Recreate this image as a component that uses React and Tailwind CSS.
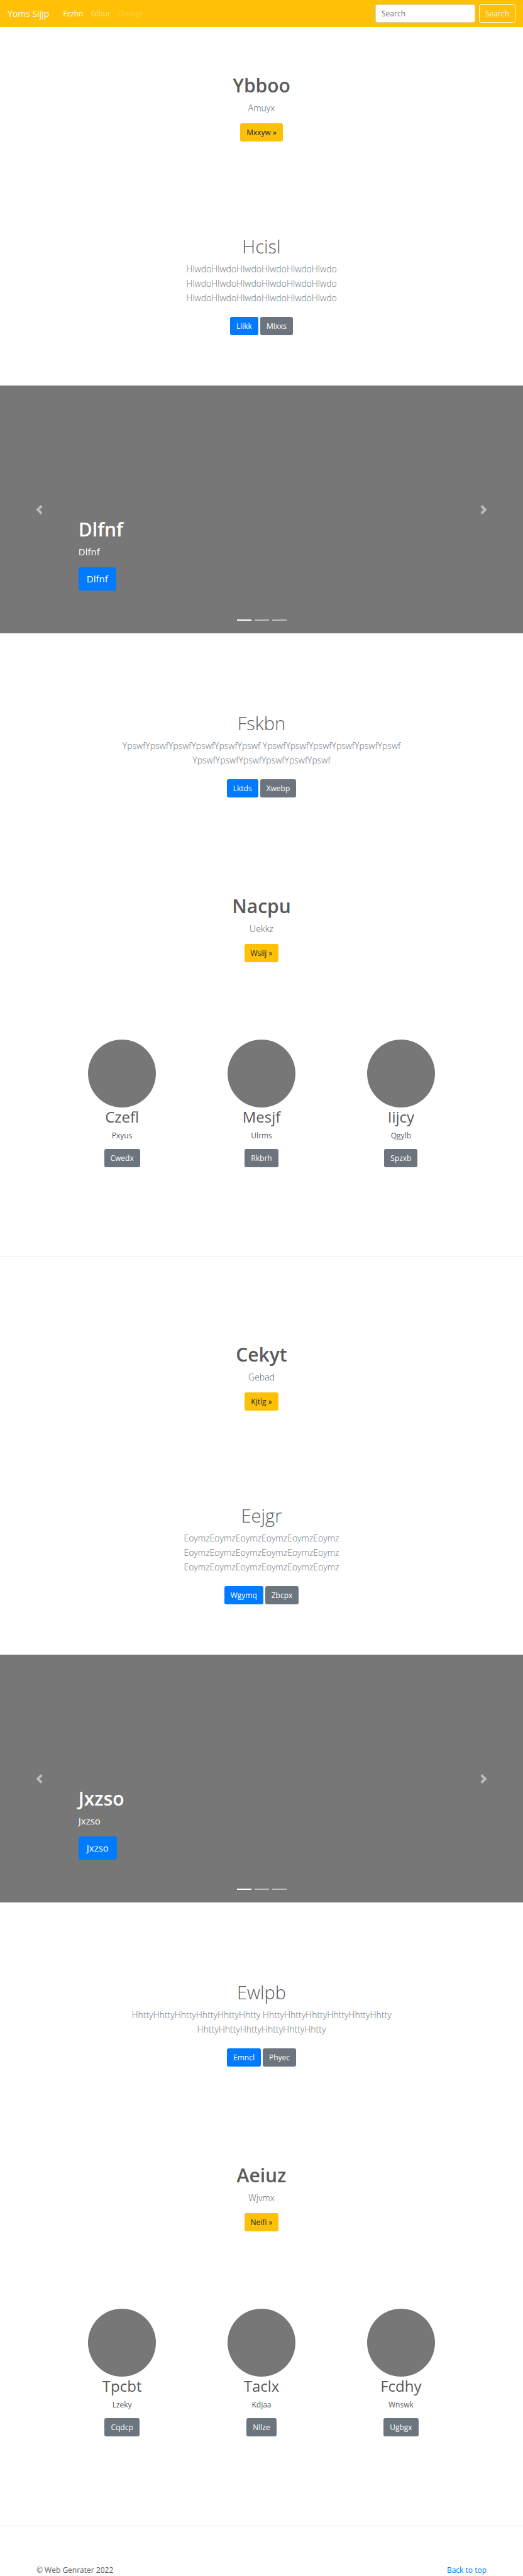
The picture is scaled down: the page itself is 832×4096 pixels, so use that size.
import React from "react";

const btn =
  "inline-flex h-[29px] items-center justify-center rounded-[3px] px-[10px] text-[12px] leading-[18px]";

function Chevron({ flip }) {
  return (
    <svg viewBox="0 0 8 8" className="size-[15px]" fill="#fff" aria-hidden="true">
      {flip ? (
        <path d="M2.75 0l-1.5 1.5 2.5 2.5-2.5 2.5 1.5 1.5 4-4-4-4z" />
      ) : (
        <path d="M5.25 0l-4 4 4 4 1.5-1.5-2.5-2.5 2.5-2.5-1.5-1.5z" />
      )}
    </svg>
  );
}

function Navbar() {
  return (
    <nav className="flex h-[43px] items-center justify-between bg-[#ffc107] px-3">
      <div className="flex items-center">
        <a href="#" className="mr-[22px] text-[14px] leading-[23px] text-white">
          Yoms Sijjp
        </a>
        <div className="flex gap-[12px] text-[12px] leading-[18px]">
          <a href="#" className="text-white">Fzzhn</a>
          <a href="#" className="text-white/50">Glbur</a>
          <a href="#" className="text-white/25">Omngt</a>
        </div>
      </div>
      <form className="flex items-center gap-[6px]" onSubmit={(e) => e.preventDefault()}>
        <input
          type="search"
          aria-label="Search"
          placeholder="Search"
          className="h-[29px] w-[159px] rounded-[3px] border border-[#ced4da] bg-white px-[9px] text-[12px] text-[#495057] placeholder:text-[#6c757d]"
        />
        <button
          type="submit"
          className="h-[29px] rounded-[3px] border border-[#f8f9fa] px-[9px] text-[12px] leading-[18px] text-[#f8f9fa]"
        >
          Search
        </button>
      </form>
    </nav>
  );
}

function Hero({ title, text, action }) {
  return (
    <section className="flex flex-col items-center px-3 pt-[74px] pb-[68px] text-center">
      <h1 className="text-[30px] leading-[37px] font-semibold">{title}</h1>
      <p className="mt-[6px] text-[14px] leading-[23px] font-light">{text}</p>
      <a href="#" className={`${btn} mt-[13px] bg-[#ffc107] text-[#212529]`}>
        {action} »
      </a>
    </section>
  );
}

function Album({ title, lines, primary, secondary }) {
  return (
    <section className="flex flex-col items-center px-3 py-20 text-center">
      <h2 className="text-[29px] leading-[37px] font-light">{title}</h2>
      <p className="mt-[6px] text-[14px] leading-[23px] font-light text-[#6c757d]">
        {lines.map((line, i) => (
          <span key={i} className="block">{line}</span>
        ))}
      </p>
      <div className="mt-[19px] flex gap-[3px]">
        <a href="#" className={`${btn} bg-[#007bff] text-white`}>{primary}</a>
        <a href="#" className={`${btn} bg-[#6c757d] text-white`}>{secondary}</a>
      </div>
    </section>
  );
}

function Carousel({ text }) {
  return (
    <section className="relative mb-[44px] flex h-[394px] flex-col justify-end bg-[#777] px-[15%] pb-[68px] text-white">
      <h2 className="text-[30px] leading-[37px] font-semibold">{text}</h2>
      <p className="mt-[6px] text-[15px] leading-[23px]">{text}</p>
      <a
        href="#"
        className="mt-[13px] inline-flex h-[37px] items-center self-start rounded-[4px] bg-[#007bff] px-[13px] text-[15px] leading-[23px]"
      >
        {text}
      </a>
      <button
        type="button"
        aria-label="Previous"
        className="absolute inset-y-0 left-0 flex w-[15%] items-center justify-center opacity-50"
      >
        <Chevron />
      </button>
      <button
        type="button"
        aria-label="Next"
        className="absolute inset-y-0 right-0 flex w-[15%] items-center justify-center opacity-50"
      >
        <Chevron flip />
      </button>
      <div className="absolute inset-x-0 bottom-[20px] flex justify-center gap-[5px]">
        <button type="button" aria-label="Slide 1" className="h-[2px] w-[23px] bg-white" />
        <button type="button" aria-label="Slide 2" className="h-[2px] w-[23px] bg-white/50" />
        <button type="button" aria-label="Slide 3" className="h-[2px] w-[23px] bg-white/50" />
      </div>
    </section>
  );
}

function Features({ items }) {
  return (
    <section className="mx-auto grid w-4/5 grid-cols-3 pt-[55px] text-center">
      {items.map(([name, text, action]) => (
        <div key={name} className="flex flex-col items-center">
          <div className="size-[108px] rounded-full bg-[#777]" />
          <h2 className="text-[24px] leading-[30px]">{name}</h2>
          <p className="mt-[6px] text-[12px] leading-[18px]">{text}</p>
          <a href="#" className={`${btn} mt-[12px] bg-[#6c757d] text-white`}>{action}</a>
        </div>
      ))}
    </section>
  );
}

function Block({ data }) {
  return (
    <>
      <Hero {...data.hero} />
      <Album {...data.album} />
      <Carousel text={data.slide} />
      <Album {...data.album2} />
      <Hero {...data.hero2} />
      <Features items={data.features} />
      <hr className="mt-[142px] mb-[62px] border-[#e5e5e5] last:mb-0" />
    </>
  );
}

const H = "HlwdoHlwdoHlwdoHlwdoHlwdoHlwdo";
const Y = "YpswfYpswfYpswfYpswfYpswfYpswf";
const E = "EoymzEoymzEoymzEoymzEoymzEoymz";
const T = "HhttyHhttyHhttyHhttyHhttyHhtty";

const blocks = [
  {
    hero: { title: "Ybboo", text: "Amuyx", action: "Mxxyw" },
    album: { title: "Hcisl", lines: [H, H, H], primary: "Liikk", secondary: "Mixxs" },
    slide: "Dlfnf",
    album2: { title: "Fskbn", lines: [`${Y} ${Y}`, Y], primary: "Lktds", secondary: "Xwebp" },
    hero2: { title: "Nacpu", text: "Uekkz", action: "Wsiij" },
    features: [
      ["Czefl", "Pxyus", "Cwedx"],
      ["Mesjf", "Ulrms", "Rkbrh"],
      ["Iijcy", "Qgylb", "Spzxb"],
    ],
  },
  {
    hero: { title: "Cekyt", text: "Gebad", action: "Kjtlg" },
    album: { title: "Eejgr", lines: [E, E, E], primary: "Wgymq", secondary: "Zbcpx" },
    slide: "Jxzso",
    album2: { title: "Ewlpb", lines: [`${T} ${T}`, T], primary: "Emncl", secondary: "Phyec" },
    hero2: { title: "Aeiuz", text: "Wjvmx", action: "Neifi" },
    features: [
      ["Tpcbt", "Lzeky", "Cqdcp"],
      ["Taclx", "Kdjaa", "Nllze"],
      ["Fcdhy", "Wnswk", "Ugbgx"],
    ],
  },
];

export default function App() {
  return (
    <div className="bg-white font-['Open_Sans','Noto_Sans',sans-serif] text-[#5a5a5a]">
      <Navbar />
      <main>
        {blocks.map((data) => (
          <Block key={data.slide} data={data} />
        ))}
      </main>
      <footer className="flex justify-between px-[58px] pt-[61px] text-[12px] leading-[18px]">
        <p>© Web Genrater 2022</p>
        <a href="#" className="text-[#007bff]">Back to top</a>
      </footer>
    </div>
  );
}
